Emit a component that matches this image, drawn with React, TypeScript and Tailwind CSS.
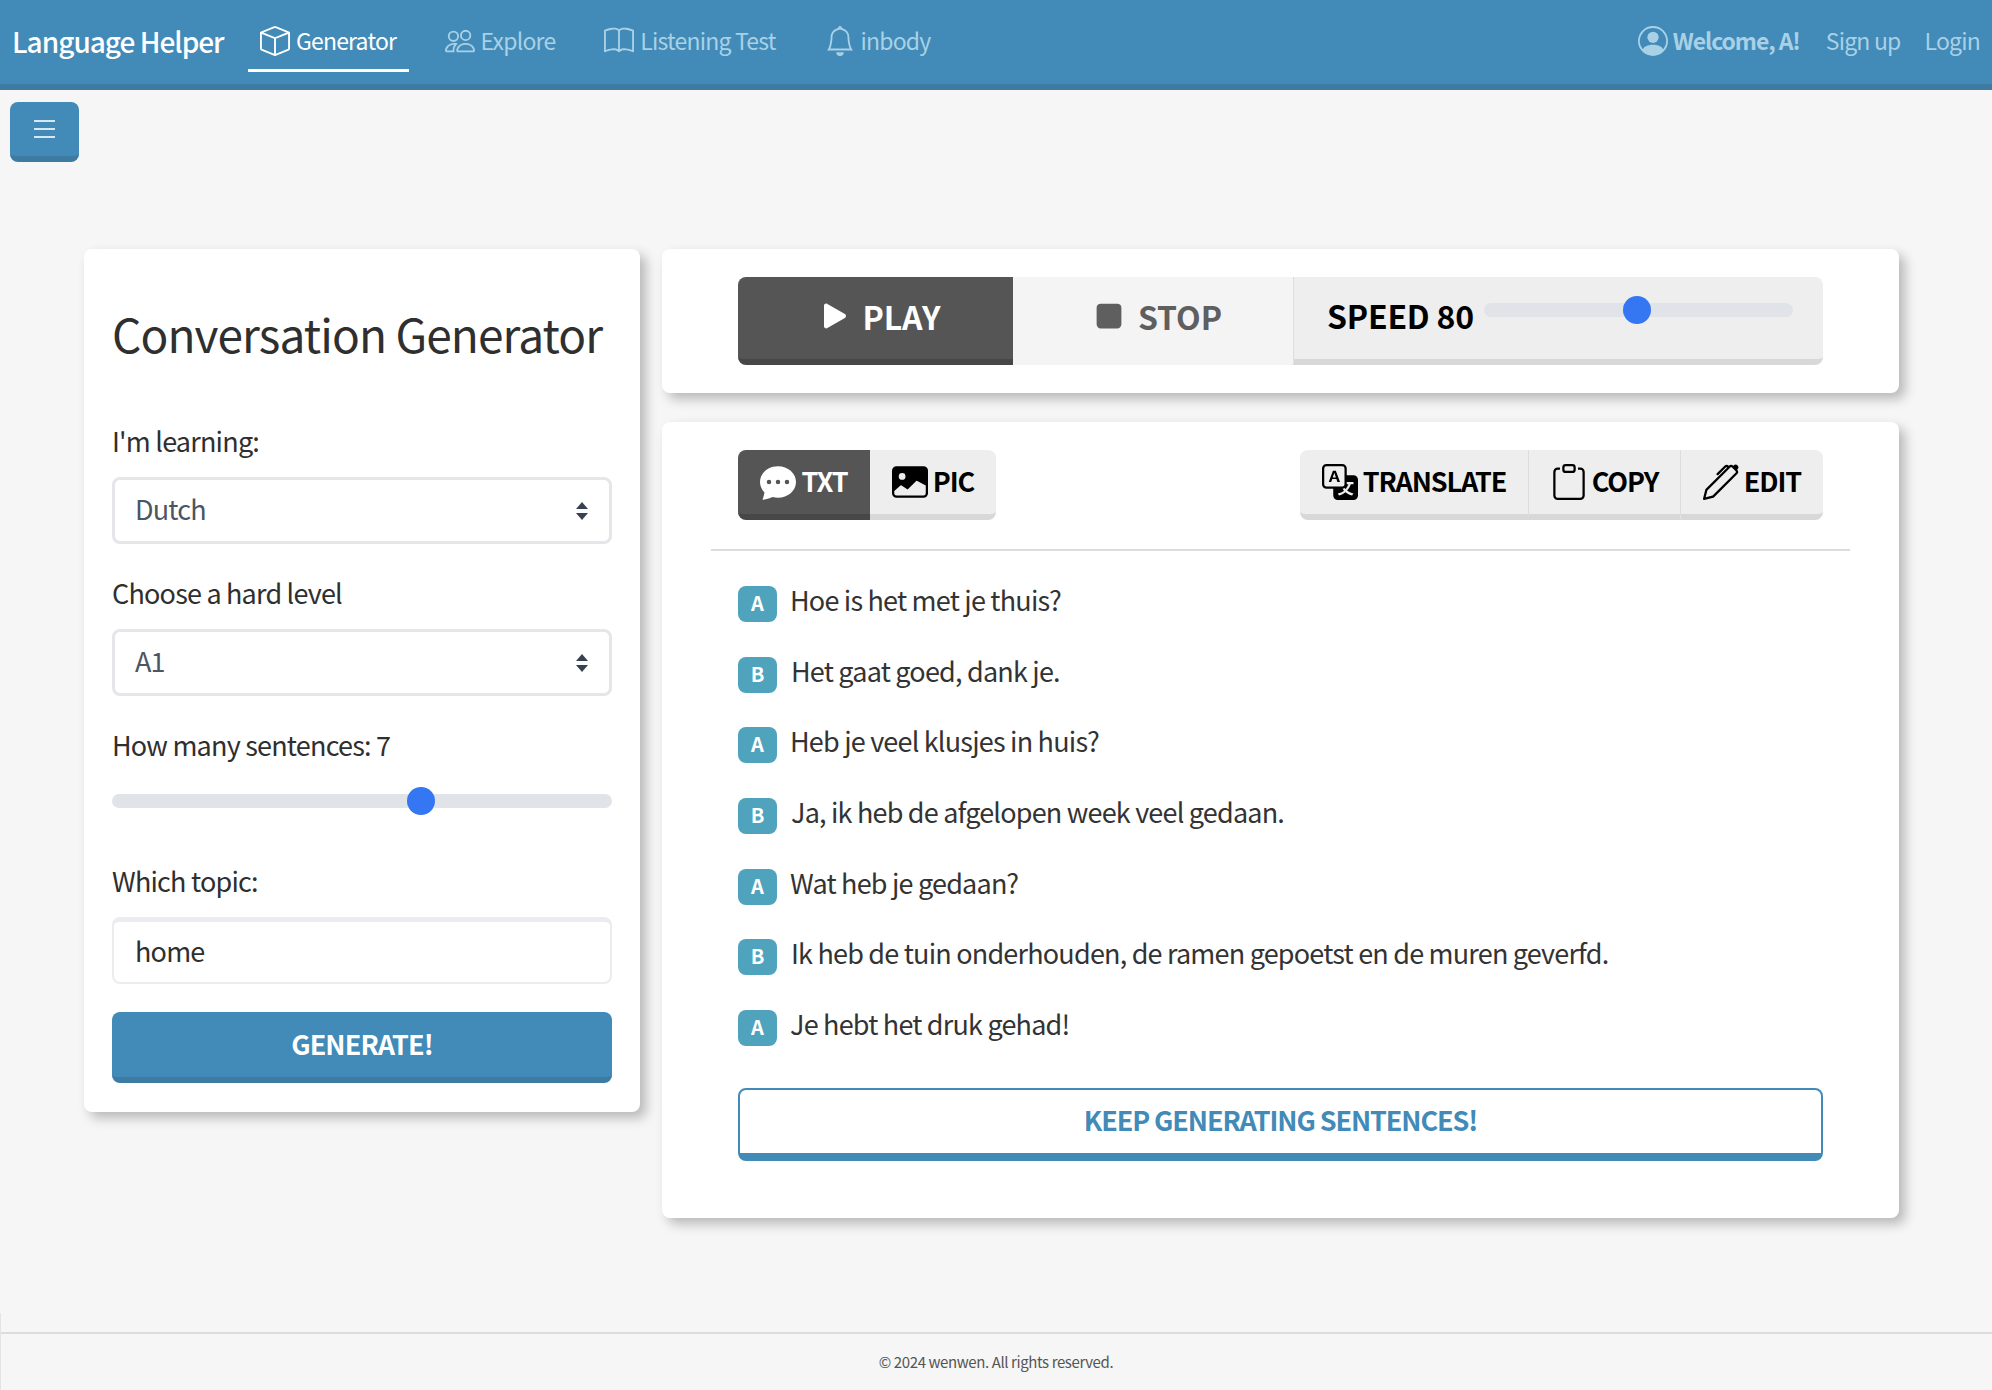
import React from 'react';
import {
  BsBox,
  BsPeople,
  BsBook,
  BsBell,
  BsPersonCircle,
  BsPlayFill,
  BsStopFill,
  BsChatDotsFill,
  BsImageFill,
  BsTranslate,
  BsClipboard,
  BsPen,
} from 'react-icons/bs';

const navItems = [
  { label: 'Explore', icon: BsPeople },
  { label: 'Listening Test', icon: BsBook },
  { label: 'inbody', icon: BsBell },
];

const sentences = [
  { who: 'A', text: 'Hoe is het met je thuis?' },
  { who: 'B', text: 'Het gaat goed, dank je.' },
  { who: 'A', text: 'Heb je veel klusjes in huis?' },
  { who: 'B', text: 'Ja, ik heb de afgelopen week veel gedaan.' },
  { who: 'A', text: 'Wat heb je gedaan?' },
  { who: 'B', text: 'Ik heb de tuin onderhouden, de ramen gepoetst en de muren geverfd.' },
  { who: 'A', text: 'Je hebt het druk gehad!' },
];

const Slider = ({ percent }: { percent: number }) => (
  <div className="relative h-[14px] w-full rounded-full bg-[#e0e3e8]">
    <div
      className="absolute top-[-7px] ml-[-14px] h-[28px] w-[28px] rounded-full bg-[#3576f2]"
      style={{ left: `${percent}%` }}
    />
  </div>
);

const SelectBox = ({ value }: { value: string }) => (
  <div className="flex h-[67px] items-center justify-between rounded-lg border-[3px] border-[#e4e6ea] bg-white pl-[20px] pr-[20px] text-[27px] tracking-[-0.8px] text-[#4b5563]">
    <span className="-mt-[3px]">{value}</span>
    <svg width="14" height="20" viewBox="0 0 14 20" fill="#374151">
      <path d="M7 1 L13 8 H1 Z" />
      <path d="M7 19 L13 12 H1 Z" />
    </svg>
  </div>
);

const ToolButton = ({
  icon: Icon,
  label,
  className,
  iconClass,
}: {
  icon: React.ComponentType<{ className?: string }>;
  label: string;
  className: string;
  iconClass: string;
}) => (
  <div className={`flex items-center justify-center gap-[5px] ${className}`}>
    <Icon className={iconClass} />
    <span className="-mt-[4px]">{label}</span>
  </div>
);

export default function App() {
  return (
    <div className="relative flex h-[1390px] flex-col overflow-hidden bg-[#f6f6f6] font-['Noto_Sans_CJK_SC',sans-serif] text-[#2f2f2f]">
      {/* Navbar */}
      <header className="flex h-[90px] shrink-0 items-start border-b-[6px] border-[#3d7ba3] bg-[#428ab7] pl-[12px] pr-[12px]">
        <div className="mr-[24px] flex h-[82px] items-center text-[28px] font-medium leading-none tracking-[-1px] text-white">
          Language Helper
        </div>
        <nav className="flex h-[84px] items-start gap-[23px] pt-[15px] text-[23px] leading-none tracking-[-0.8px]">
          <div className="flex h-[57px] w-[161px] items-center justify-center gap-[6px] border-b-[3px] border-white pb-[3px] text-white">
            <BsBox className="h-[30px] w-[30px]" />
            <span>Generator</span>
          </div>
          {navItems.map((item) => (
            <div key={item.label} className="flex h-[57px] items-center gap-[6px] px-[13px] pb-[6px] text-[#a8d1e6]">
              <item.icon className="h-[30px] w-[30px]" />
              <span>{item.label}</span>
            </div>
          ))}
        </nav>
        <div className="ml-auto flex h-[84px] items-center pb-[3px] text-[23px] leading-none tracking-[-0.8px] text-[#a8d1e6]">
          <BsPersonCircle className="mr-[5px] h-[30px] w-[30px]" />
          <span className="mr-[26px] font-bold tracking-[-1.1px]">Welcome, A!</span>
          <span className="mr-[24px]">Sign up</span>
          <span>Login</span>
        </div>
      </header>

      {/* Sidebar toggle */}
      <div className="h-[159px] shrink-0 pl-[10px] pt-[12px]">
        <button className="flex h-[60px] w-[69px] items-center justify-center rounded-lg border-b-[6px] border-[#3d7ba3] bg-[#428ab7]">
          <span className="flex w-[21px] flex-col gap-[6px]">
            <span className="h-[2px] bg-[#d6e8f2]" />
            <span className="h-[2px] bg-[#d6e8f2]" />
            <span className="h-[2px] bg-[#d6e8f2]" />
          </span>
        </button>
      </div>

      {/* Main */}
      <main className="flex flex-1 items-start gap-[22px] pl-[84px]">
        {/* Form card */}
        <section className="w-[556px] rounded-lg bg-white px-[28px] pb-[29px] pt-[56px] shadow-[6px_6px_12px_rgba(0,0,0,0.25)]">
          <h1 className="h-[60px] whitespace-nowrap text-[46px] font-normal leading-[56px] tracking-[-0.9px] text-[#2f2f2f]">Conversation Generator</h1>
          <div className="mb-[17px] mt-[59px] h-[36px] text-[27px] leading-[34px] tracking-[-0.8px]">I'm learning:</div>
          <SelectBox value="Dutch" />
          <div className="mb-[17px] mt-[32px] h-[36px] text-[27px] leading-[34px] tracking-[-0.8px]">Choose a hard level</div>
          <SelectBox value="A1" />
          <div className="mb-[30px] mt-[32px] h-[36px] text-[27px] leading-[34px] tracking-[-0.8px]">How many sentences: 7</div>
          <Slider percent={61.8} />
          <div className="mb-[17px] mt-[56px] h-[36px] text-[27px] leading-[34px] tracking-[-0.8px]">Which topic:</div>
          <input
            readOnly
            value="home"
            className="h-[67px] w-full rounded-lg border-2 border-t-[5px] border-[#ebecef] bg-white px-[21px] pb-[3px] text-[27px] tracking-[-0.8px] text-[#2f2f2f] outline-none"
          />
          <button className="mt-[28px] h-[71px] w-full rounded-lg border-b-[6px] border-[#3d7ba3] bg-[#428ab7] pb-[3px] text-[27px] font-bold leading-none tracking-[-0.9px] text-white">
            GENERATE!
          </button>
        </section>

        {/* Right column */}
        <div className="flex w-[1237px] flex-col gap-[29px]">
          {/* Player */}
          <section className="rounded-lg bg-white px-[76px] py-[28px] shadow-[6px_6px_12px_rgba(0,0,0,0.25)]">
            <div className="flex h-[88px] text-[32px] font-bold leading-none">
              <div className="flex w-[275px] items-center justify-center gap-[5px] rounded-l-lg border-b-[6px] border-[#474747] bg-[#555555] pb-[4px] pl-[3px] text-white">
                <BsPlayFill className="h-[44px] w-[44px]" />
                <span>PLAY</span>
              </div>
              <div className="flex w-[280px] items-center justify-center gap-[7px] bg-[#f4f4f4] pb-[10px] pl-[3px] text-[#5f5f5f]">
                <BsStopFill className="h-[44px] w-[44px]" />
                <span>STOP</span>
              </div>
              <div className="flex flex-1 items-start rounded-r-lg border-b-[6px] border-l border-[#d8d8d8] border-l-[#dddddd] bg-[#eeeeee] pl-[33px] pr-[30px] text-black">
                <span className="mt-[22px] whitespace-nowrap tracking-[-0.2px]">SPEED 80</span>
                <div className="ml-[10px] mt-[26px] flex-1">
                  <Slider percent={49.5} />
                </div>
              </div>
            </div>
          </section>

          {/* Conversation */}
          <section className="rounded-lg bg-white px-[49px] pb-[57px] pt-[28px] shadow-[6px_6px_12px_rgba(0,0,0,0.25)]">
            <div className="flex h-[70px] justify-between px-[27px] text-[27px] font-bold leading-none tracking-[-1.1px] text-black">
              <div className="flex">
                <ToolButton
                  icon={BsChatDotsFill}
                  label="TXT"
                  className="w-[132px] rounded-l-lg border-b-[6px] border-[#474747] bg-[#555555] text-white"
                  iconClass="h-[36px] w-[36px]"
                />
                <ToolButton
                  icon={BsImageFill}
                  label="PIC"
                  className="w-[126px] rounded-r-lg border-b-[6px] border-[#d8d8d8] bg-[#eeeeee]"
                  iconClass="h-[36px] w-[36px]"
                />
              </div>
              <div className="flex">
                <ToolButton
                  icon={BsTranslate}
                  label="TRANSLATE"
                  className="w-[228px] rounded-l-lg border-b-[6px] border-[#d8d8d8] bg-[#eeeeee]"
                  iconClass="h-[36px] w-[36px]"
                />
                <ToolButton
                  icon={BsClipboard}
                  label="COPY"
                  className="w-[152px] border-b-[6px] border-l border-[#d8d8d8] border-l-[#dddddd] bg-[#eeeeee]"
                  iconClass="h-[36px] w-[36px]"
                />
                <ToolButton
                  icon={BsPen}
                  label="EDIT"
                  className="w-[143px] rounded-r-lg border-b-[6px] border-l border-[#d8d8d8] border-l-[#dddddd] bg-[#eeeeee]"
                  iconClass="h-[36px] w-[36px]"
                />
              </div>
            </div>
            <hr className="mt-[29px] border-t-2 border-[#dcdcdc]" />
            <div className="mt-[35px] flex flex-col gap-[34.67px] px-[27px]">
              {sentences.map((s, index) => (
                <div key={index} className="flex h-[36px] items-center text-[27px] leading-none tracking-[-0.8px] text-[#333333]">
                  <span className={`flex h-[36px] w-[39px] shrink-0 items-center justify-center rounded-lg bg-[#4fa3bd] pb-[2px] text-[20px] font-bold tracking-normal text-white ${s.who === 'B' ? 'mr-[14px]' : 'mr-[13px]'}`}>
                    {s.who}
                  </span>
                  <span className="-mt-[9px]">{s.text}</span>
                </div>
              ))}
            </div>
            <div className="mt-[42px] px-[27px]">
              <button className="h-[73px] w-full rounded-lg border-2 border-b-[8px] border-[#428ab7] bg-white pb-[3px] text-[27px] font-bold leading-none tracking-[-1.1px] text-[#428ab7]">
                KEEP GENERATING SENTENCES!
              </button>
            </div>
          </section>
        </div>
      </main>

      {/* Footer */}
      <footer className="flex h-[58px] shrink-0 items-center justify-center border-t-2 border-[#dcdcdc] pb-[2px] text-[15px] leading-none tracking-[-0.4px] text-[#555555]">
        © 2024 wenwen. All rights reserved.
      </footer>
      <div className="absolute bottom-0 left-0 h-[77px] w-px bg-[#e4e4e4]" />
    </div>
  );
}
